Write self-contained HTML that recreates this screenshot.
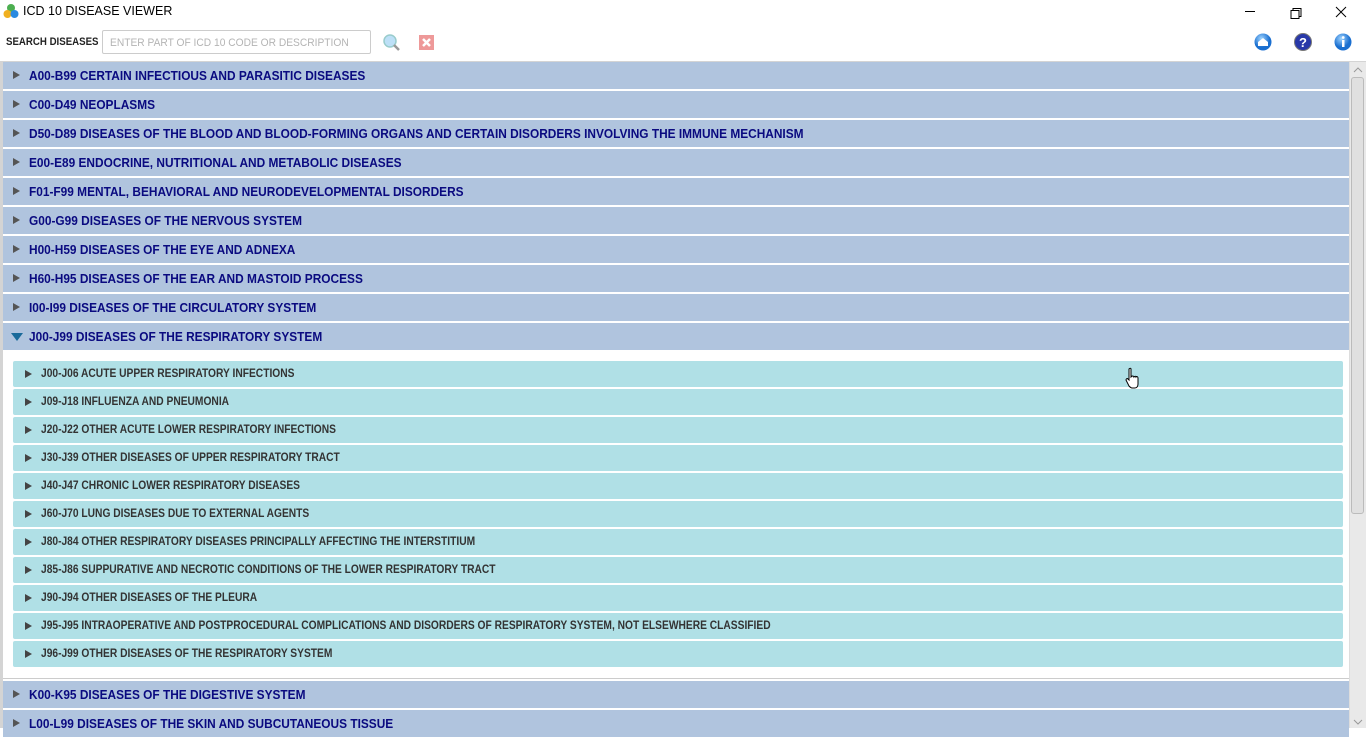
<!DOCTYPE html>
<html><head><meta charset="utf-8"><style>
*{margin:0;padding:0;box-sizing:border-box}
body{width:1366px;height:728px;overflow:hidden;background:#fff;font-family:"Liberation Sans",sans-serif;position:relative}
.abs{position:absolute}
.title{left:23px;top:4px;font-size:12.5px;color:#000}
.lbl{left:6px;top:36px;font-size:11px;font-weight:bold;color:#222;transform:scaleX(.88);transform-origin:left}
.inp{left:102px;top:30px;width:269px;height:24px;border:1px solid #ccc;border-radius:2px}
.inp span{position:absolute;left:7px;top:6px;font-size:11px;color:#b4b4b4;white-space:nowrap;transform:scaleX(.93);transform-origin:left}
.frame{left:0;top:61px;width:1366px;height:667px;border-left:3px solid #d4d4d4;border-top:1px solid #d4d4d4}
.r{position:absolute;left:3px;width:1346px;height:27px;background:#b0c4de}
.r span{position:absolute;left:26px;top:7px;font-size:12.5px;font-weight:bold;color:#0a0a80;white-space:nowrap;transform:scaleX(.95);transform-origin:left}
.tri{position:absolute;left:10px;top:9px;width:0;height:0;border-top:4.5px solid transparent;border-bottom:4.5px solid transparent;border-left:7px solid #555}
.c{position:absolute;left:13px;width:1330px;height:26px;background:#b0e0e6;border-radius:2px}
.c span{position:absolute;left:28px;top:7px;font-size:11.5px;font-weight:bold;color:#333;white-space:nowrap;transform:scaleX(.89);transform-origin:left}
.c .tri{left:12px;top:9px;border-left-color:#444}
.sb{left:1349px;top:62px;width:17px;height:666px;background:#e9e9e9;border-left:1px solid #ddd}
.thumb{left:1351px;top:77px;width:13px;height:437px;background:#e0e0e0;border:1px solid #bbb;border-radius:3px}
</style></head><body>
<svg class="abs" style="left:3px;top:3px" width="16" height="16"><circle cx="8" cy="5" r="4" fill="#4caf50"/><circle cx="4.5" cy="11" r="4" fill="#f0b020"/><circle cx="11.5" cy="11" r="4" fill="#2a8ae0"/></svg>
<div class="abs title">ICD 10 DISEASE VIEWER</div>
<svg class="abs" style="left:1240px;top:4px" width="120" height="16"><path d="M5 7.5H15" stroke="#000"/><path d="M51 6.5h8v8h-8zM53 6.5V4.5h8v8h-2" stroke="#000" fill="none"/><path d="M96 3l10 10M106 3L96 13" stroke="#000"/></svg>
<div class="abs lbl">SEARCH DISEASES</div>
<div class="abs inp"><span>ENTER PART OF ICD 10 CODE OR DESCRIPTION</span></div>
<svg class="abs" style="left:382px;top:33px" width="20" height="20"><circle cx="8" cy="8" r="6" fill="#bde0f7" stroke="#9cc" stroke-width="1.5"/><path d="M12 12l5 5" stroke="#999" stroke-width="2.5"/></svg>
<div class="abs" style="left:419px;top:35px;width:15px;height:15px;background:#e99;"></div>
<svg class="abs" style="left:419px;top:35px" width="15" height="15"><path d="M4 4l7 7M11 4l-7 7" stroke="#fff" stroke-width="2.5"/></svg>
<svg class="abs" style="left:1254px;top:32px" width="110" height="20"><defs><radialGradient id="g" cx=".4" cy=".3"><stop offset="0" stop-color="#9fd4ff"/><stop offset="1" stop-color="#1a6fd0"/></radialGradient></defs><circle cx="9" cy="10" r="8.5" fill="url(#g)"/><path d="M4 10l5-4 5 4v4H4z" fill="#fff"/><circle cx="49" cy="10" r="8.5" fill="#2838a8" stroke="#777"/><text x="49" y="15" font-size="13" font-weight="bold" fill="#fff" text-anchor="middle" font-family="Liberation Sans">?</text><circle cx="89" cy="10" r="8.5" fill="url(#g)"/><rect x="88" y="8" width="2.5" height="7" fill="#fff"/><circle cx="89.2" cy="5.5" r="1.4" fill="#fff"/></svg>
<div class="abs frame"></div>
<div class="r" style="top:62px"><i class="tri"></i><span>A00-B99 CERTAIN INFECTIOUS AND PARASITIC DISEASES</span></div>
<div class="r" style="top:91px"><i class="tri"></i><span>C00-D49 NEOPLASMS</span></div>
<div class="r" style="top:120px"><i class="tri"></i><span>D50-D89 DISEASES OF THE BLOOD AND BLOOD-FORMING ORGANS AND CERTAIN DISORDERS INVOLVING THE IMMUNE MECHANISM</span></div>
<div class="r" style="top:149px"><i class="tri"></i><span>E00-E89 ENDOCRINE, NUTRITIONAL AND METABOLIC DISEASES</span></div>
<div class="r" style="top:178px"><i class="tri"></i><span>F01-F99 MENTAL, BEHAVIORAL AND NEURODEVELOPMENTAL DISORDERS</span></div>
<div class="r" style="top:207px"><i class="tri"></i><span>G00-G99 DISEASES OF THE NERVOUS SYSTEM</span></div>
<div class="r" style="top:236px"><i class="tri"></i><span>H00-H59 DISEASES OF THE EYE AND ADNEXA</span></div>
<div class="r" style="top:265px"><i class="tri"></i><span>H60-H95 DISEASES OF THE EAR AND MASTOID PROCESS</span></div>
<div class="r" style="top:294px"><i class="tri"></i><span>I00-I99 DISEASES OF THE CIRCULATORY SYSTEM</span></div>
<div class="r" style="top:323px"><i style="position:absolute;left:8px;top:10px;border-left:6px solid transparent;border-right:6px solid transparent;border-top:8px solid #1a6a9a"></i><span>J00-J99 DISEASES OF THE RESPIRATORY SYSTEM</span></div>
<div class="c" style="top:361px"><i class="tri"></i><span>J00-J06 ACUTE UPPER RESPIRATORY INFECTIONS</span></div>
<div class="c" style="top:389px"><i class="tri"></i><span>J09-J18 INFLUENZA AND PNEUMONIA</span></div>
<div class="c" style="top:417px"><i class="tri"></i><span>J20-J22 OTHER ACUTE LOWER RESPIRATORY INFECTIONS</span></div>
<div class="c" style="top:445px"><i class="tri"></i><span>J30-J39 OTHER DISEASES OF UPPER RESPIRATORY TRACT</span></div>
<div class="c" style="top:473px"><i class="tri"></i><span>J40-J47 CHRONIC LOWER RESPIRATORY DISEASES</span></div>
<div class="c" style="top:501px"><i class="tri"></i><span>J60-J70 LUNG DISEASES DUE TO EXTERNAL AGENTS</span></div>
<div class="c" style="top:529px"><i class="tri"></i><span>J80-J84 OTHER RESPIRATORY DISEASES PRINCIPALLY AFFECTING THE INTERSTITIUM</span></div>
<div class="c" style="top:557px"><i class="tri"></i><span>J85-J86 SUPPURATIVE AND NECROTIC CONDITIONS OF THE LOWER RESPIRATORY TRACT</span></div>
<div class="c" style="top:585px"><i class="tri"></i><span>J90-J94 OTHER DISEASES OF THE PLEURA</span></div>
<div class="c" style="top:613px"><i class="tri"></i><span>J95-J95 INTRAOPERATIVE AND POSTPROCEDURAL COMPLICATIONS AND DISORDERS OF RESPIRATORY SYSTEM, NOT ELSEWHERE CLASSIFIED</span></div>
<div class="c" style="top:641px"><i class="tri"></i><span>J96-J99 OTHER DISEASES OF THE RESPIRATORY SYSTEM</span></div>
<div class="abs" style="left:3px;top:678px;width:1346px;height:1px;background:#ccc"></div>
<div class="r" style="top:681px"><i class="tri"></i><span>K00-K95 DISEASES OF THE DIGESTIVE SYSTEM</span></div>
<div class="r" style="top:710px"><i class="tri"></i><span>L00-L99 DISEASES OF THE SKIN AND SUBCUTANEOUS TISSUE</span></div>
<div class="abs sb"></div>
<div class="abs thumb"></div>
<svg class="abs" style="left:1351px;top:64px" width="14" height="664"><path d="M3 8l4-4 4 4" stroke="#999" fill="none"/><path d="M3 656l4 4 4-4" stroke="#999" fill="none"/></svg>
<svg class="abs" style="left:1124px;top:367px" width="18" height="24"><path d="M5 2c1-1 2-1 2 0v8l1-1c1 0 2 0 2 1 1-1 2-1 2 0 1-1 2 0 2 1v6c0 2-1 4-3 4H8c-1 0-2-1-3-2L2 13c0-1 1-2 2-1l1 1z" fill="#fff" stroke="#000"/></svg>
</body></html>
